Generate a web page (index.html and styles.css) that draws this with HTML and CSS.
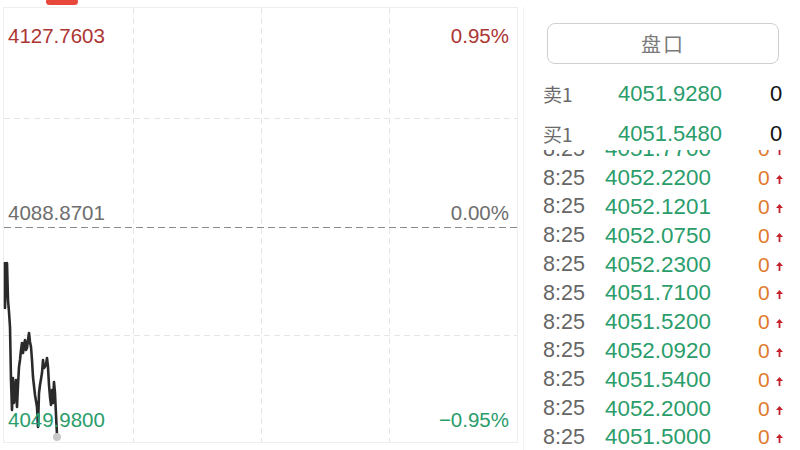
FILE: index.html
```html
<!DOCTYPE html>
<html lang="zh">
<head>
<meta charset="utf-8">
<link rel="stylesheet" href="styles.css">
</head>
<body>
<div class="page">
  <div class="tab-indicator"></div>
  <div class="chart-col">
    <div class="chart">
      <svg class="grid" width="515" height="436" viewBox="0 0 515 436">
        <g transform="translate(-3,-7)">
          <rect x="3.5" y="7.5" width="514" height="435" fill="none" stroke="#eeeeee" stroke-width="1"/>
          <line x1="133.5" y1="8" x2="133.5" y2="442" stroke="#e6e6e6" stroke-dasharray="6 4"/>
          <line x1="261.5" y1="8" x2="261.5" y2="442" stroke="#e6e6e6" stroke-dasharray="6 4"/>
          <line x1="389.5" y1="8" x2="389.5" y2="442" stroke="#e6e6e6" stroke-dasharray="6 4"/>
          <line x1="4" y1="118.5" x2="517" y2="118.5" stroke="#e6e6e6" stroke-dasharray="6 4"/>
          <line x1="4" y1="335.5" x2="517" y2="335.5" stroke="#e6e6e6" stroke-dasharray="6 4"/>
          <line x1="4" y1="227.5" x2="517" y2="227.5" stroke="#8a8a8a" stroke-dasharray="7 4"/>
          <polyline fill="none" stroke="#2a2a2a" stroke-width="2.6" stroke-linejoin="round"
            points="5,262 5,308 6,270 7,263 8,300 9,312 10,327 11,380 12,410 13,378 14,403 15,392 16,380 17,407 18,385 19,367 20,360 21,350 22,343 23,353 24,345 25,340 26,350 27,348 28,340 29,333 30,342 31,347 32,360 33,377 35,395 37,407 38,427 39,393 40,385 42,373 43,360 44,368 46,365 47,358 48,367 49,385 50,397 51,405 52,390 53,403 54,382 55,393 56,415 57,435"/>
          <circle cx="57" cy="437" r="4" fill="#c8c8c8"/>
        </g>
      </svg>
      <div class="lbl lbl-top-l up">4127.7603</div>
      <div class="lbl lbl-top-r up">0.95%</div>
      <div class="lbl lbl-mid-l flat">4088.8701</div>
      <div class="lbl lbl-mid-r flat">0.00%</div>
      <div class="lbl lbl-bot-l down">4049.9800</div>
      <div class="lbl lbl-bot-r down">−0.95%</div>
    </div>
  </div>
  <div class="panel">
    <div class="pankou-btn">盘口</div>
    <div class="depth-row">
      <span class="depth-name">卖1</span>
      <span class="depth-price">4051.9280</span>
      <span class="depth-vol">0</span>
    </div>
    <div class="depth-row depth-row-last">
      <span class="depth-name">买1</span>
      <span class="depth-price">4051.5480</span>
      <span class="depth-vol">0</span>
    </div>
    <div class="trades">
      <div class="trades-inner">
        <div class="trade"><span class="t-time">8:25</span><span class="t-price">4051.7700</span><span class="t-vol">0</span><svg class="arrow" width="7" height="9" viewBox="0 0 7 9"><path d="M3.5 0 L7 4 L4.4 4 L4.4 9 L2.6 9 L2.6 4 L0 4 Z" fill="#c4232b"/></svg></div>
        <div class="trade"><span class="t-time">8:25</span><span class="t-price">4052.2200</span><span class="t-vol">0</span><svg class="arrow" width="7" height="9" viewBox="0 0 7 9"><path d="M3.5 0 L7 4 L4.4 4 L4.4 9 L2.6 9 L2.6 4 L0 4 Z" fill="#c4232b"/></svg></div>
        <div class="trade"><span class="t-time">8:25</span><span class="t-price">4052.1201</span><span class="t-vol">0</span><svg class="arrow" width="7" height="9" viewBox="0 0 7 9"><path d="M3.5 0 L7 4 L4.4 4 L4.4 9 L2.6 9 L2.6 4 L0 4 Z" fill="#c4232b"/></svg></div>
        <div class="trade"><span class="t-time">8:25</span><span class="t-price">4052.0750</span><span class="t-vol">0</span><svg class="arrow" width="7" height="9" viewBox="0 0 7 9"><path d="M3.5 0 L7 4 L4.4 4 L4.4 9 L2.6 9 L2.6 4 L0 4 Z" fill="#c4232b"/></svg></div>
        <div class="trade"><span class="t-time">8:25</span><span class="t-price">4052.2300</span><span class="t-vol">0</span><svg class="arrow" width="7" height="9" viewBox="0 0 7 9"><path d="M3.5 0 L7 4 L4.4 4 L4.4 9 L2.6 9 L2.6 4 L0 4 Z" fill="#c4232b"/></svg></div>
        <div class="trade"><span class="t-time">8:25</span><span class="t-price">4051.7100</span><span class="t-vol">0</span><svg class="arrow" width="7" height="9" viewBox="0 0 7 9"><path d="M3.5 0 L7 4 L4.4 4 L4.4 9 L2.6 9 L2.6 4 L0 4 Z" fill="#c4232b"/></svg></div>
        <div class="trade"><span class="t-time">8:25</span><span class="t-price">4051.5200</span><span class="t-vol">0</span><svg class="arrow" width="7" height="9" viewBox="0 0 7 9"><path d="M3.5 0 L7 4 L4.4 4 L4.4 9 L2.6 9 L2.6 4 L0 4 Z" fill="#c4232b"/></svg></div>
        <div class="trade"><span class="t-time">8:25</span><span class="t-price">4052.0920</span><span class="t-vol">0</span><svg class="arrow" width="7" height="9" viewBox="0 0 7 9"><path d="M3.5 0 L7 4 L4.4 4 L4.4 9 L2.6 9 L2.6 4 L0 4 Z" fill="#c4232b"/></svg></div>
        <div class="trade"><span class="t-time">8:25</span><span class="t-price">4051.5400</span><span class="t-vol">0</span><svg class="arrow" width="7" height="9" viewBox="0 0 7 9"><path d="M3.5 0 L7 4 L4.4 4 L4.4 9 L2.6 9 L2.6 4 L0 4 Z" fill="#c4232b"/></svg></div>
        <div class="trade"><span class="t-time">8:25</span><span class="t-price">4052.2000</span><span class="t-vol">0</span><svg class="arrow" width="7" height="9" viewBox="0 0 7 9"><path d="M3.5 0 L7 4 L4.4 4 L4.4 9 L2.6 9 L2.6 4 L0 4 Z" fill="#c4232b"/></svg></div>
        <div class="trade"><span class="t-time">8:25</span><span class="t-price">4051.5000</span><span class="t-vol">0</span><svg class="arrow" width="7" height="9" viewBox="0 0 7 9"><path d="M3.5 0 L7 4 L4.4 4 L4.4 9 L2.6 9 L2.6 4 L0 4 Z" fill="#c4232b"/></svg></div>
      </div>
    </div>
  </div>
</div>
</body>
</html>
```

FILE: styles.css
```css
* { box-sizing: border-box; }
html, body {
  margin: 0;
  padding: 0;
  background: #ffffff;
}
body {
  font-family: "Liberation Sans", "Noto Sans CJK SC", Arial, sans-serif;
  width: 800px;
  height: 450px;
  overflow: hidden;
}
.page {
  position: relative;
  display: flex;
  width: 800px;
  height: 450px;
}
.tab-indicator {
  position: absolute;
  left: 46px;
  top: -2px;
  width: 32px;
  height: 7px;
  border-radius: 4px;
  background: #e8473c;
  z-index: 2;
}
.chart-col {
  width: 523px;
  flex: none;
  padding: 7px 0 0 3px;
}
.chart {
  position: relative;
  width: 515px;
  height: 436px;
}
.grid {
  position: absolute;
  left: 0;
  top: 0;
  display: block;
}
.lbl {
  position: absolute;
  font-size: 20.5px;
  line-height: 24px;
  white-space: nowrap;
}
.up { color: #ad3633; }
.flat { color: #6e6e6e; }
.down { color: #2a9d6b; }
.lbl-top-l { left: 5px; top: 17px; }
.lbl-top-r { right: 9px; top: 17px; }
.lbl-mid-l { left: 5px; top: 194px; }
.lbl-mid-r { right: 9px; top: 194px; }
.lbl-bot-l { left: 5px; top: 401px; }
.lbl-bot-r { right: 9px; top: 401px; }

.panel {
  flex: 1;
  border-left: 1px solid #f2f2f2;
  margin-top: 7px;
  padding: 16px 0 0 19px;
  display: flex;
  flex-direction: column;
}
.pankou-btn {
  width: 232px;
  height: 41px;
  margin-left: 4px;
  border: 1px solid #cfcfcf;
  border-radius: 8px;
  color: #7a7a7a;
  font-family: "Noto Sans CJK SC", sans-serif;
  font-size: 20px;
  letter-spacing: 2px;
  display: flex;
  align-items: center;
  justify-content: center;
  flex: none;
}
.depth-row {
  display: flex;
  align-items: center;
  height: 40px;
  flex: none;
}
.pankou-btn + .depth-row { margin-top: 10px; }
.depth-row-last { height: 36px; align-items: flex-start; padding-top: 6px; }
.depth-name {
  width: 75px;
  color: #6a6a6a;
  font-family: "Noto Sans CJK SC", sans-serif;
  font-size: 19px;
  line-height: 28px;
}
.depth-price {
  width: 152px;
  color: #2a9d6b;
  font-size: 22px;
  line-height: 28px;
}
.depth-vol {
  color: #111;
  font-size: 22px;
  line-height: 28px;
}
.trades {
  flex: 1;
  overflow: hidden;
  min-height: 0;
}
.trades-inner {
  margin-top: -15px;
}
.trade {
  display: flex;
  align-items: center;
  height: 28.8px;
  white-space: nowrap;
}
.t-time {
  width: 62px;
  color: #666;
  font-size: 21.5px;
}
.t-price {
  width: 153px;
  color: #2a9d6b;
  font-size: 22.4px;
}
.t-vol {
  width: 18px;
  color: #e07a2c;
  font-size: 21px;
}
.arrow {
  display: block;
  margin-top: 3px;
}
```
